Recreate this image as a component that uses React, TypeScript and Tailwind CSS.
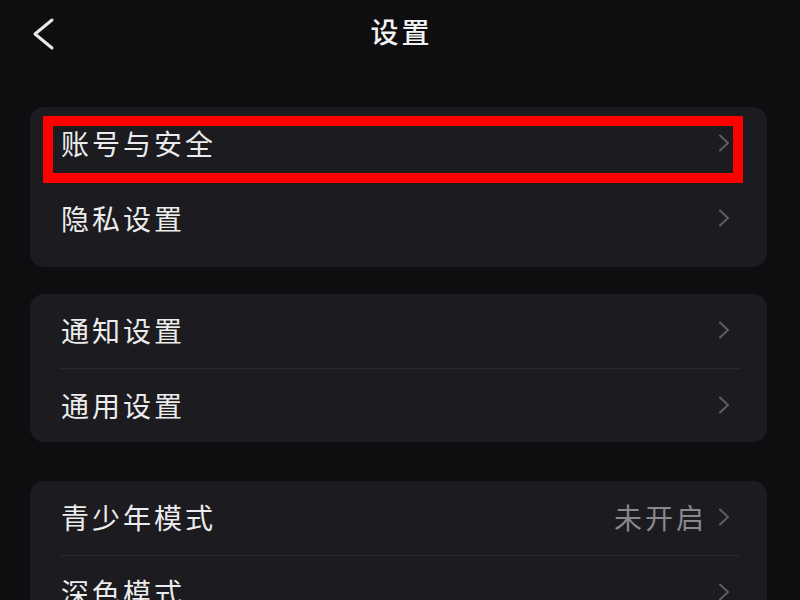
import React from 'react';

type Row = { label: string; value?: string };

const groups: Row[][] = [
  [{ label: '账号与安全' }, { label: '隐私设置' }],
  [{ label: '通知设置' }, { label: '通用设置' }],
  [{ label: '青少年模式', value: '未开启' }, { label: '深色模式' }],
];

function Chevron() {
  return (
    <svg width="14" height="18" viewBox="0 0 14 18" className="shrink-0">
      <path d="M3 1.5 L11 9 L3 16.5" fill="none" stroke="#5c5c62" strokeWidth="2" strokeLinecap="round" strokeLinejoin="round" />
    </svg>
  );
}

function SettingRow({ row, first, highlight }: { row: Row; first: boolean; highlight?: boolean }) {
  return (
    <div className="relative h-[74px]">
      {!first && <div className="ml-[30px] mr-[27px] h-px bg-[#2a2a30]" />}
      <div className="flex h-full items-center pb-[3px] pl-[31px] pr-[36px]">
        <span className="flex-1 text-[28px] leading-none tracking-[3px] text-[#ececec]">{row.label}</span>
        {row.value && <span className="mr-[10px] text-[28px] leading-none tracking-[3px] text-[#88888d]">{row.value}</span>}
        <Chevron />
      </div>
      {highlight && (
        <div className="absolute left-[13px] top-[9px] z-10 h-[67px] w-[700px] border-[10px] border-[#ff0000]" />
      )}
    </div>
  );
}

export default function App() {
  return (
    <div
      className="h-[600px] w-[800px] overflow-hidden bg-[#0e0e10]"
      style={{ fontFamily: '"Noto Sans CJK SC", "Noto Sans", sans-serif' }}
    >
      <div className="relative flex h-[68px] items-center justify-center pb-[6px]">
        <svg width="26" height="36" viewBox="0 0 26 36" className="absolute left-[30px] top-[16px]">
          <path d="M22 4 L5 18 L22 32" fill="none" stroke="#e8e8e8" strokeWidth="3" strokeLinecap="round" strokeLinejoin="round" />
        </svg>
        <h1 className="pl-[3px] text-[28px] font-medium leading-none tracking-[3px] text-[#f2f2f2]">设置</h1>
      </div>

      <div className="ml-[30px] mt-[39px] w-[737px] rounded-[14px] bg-[#1b1b20] pb-[12px]">
        {groups[0].map((r, i) => (
          <SettingRow key={r.label} row={r} first={i === 0} highlight={i === 0} />
        ))}
      </div>

      <div className="ml-[30px] mt-[27px] w-[737px] rounded-[14px] bg-[#1b1b20]">
        {groups[1].map((r, i) => (
          <SettingRow key={r.label} row={r} first={i === 0} />
        ))}
      </div>

      <div className="ml-[30px] mt-[39px] w-[737px] rounded-[14px] bg-[#1b1b20]">
        {groups[2].map((r, i) => (
          <SettingRow key={r.label} row={r} first={i === 0} />
        ))}
      </div>
    </div>
  );
}
